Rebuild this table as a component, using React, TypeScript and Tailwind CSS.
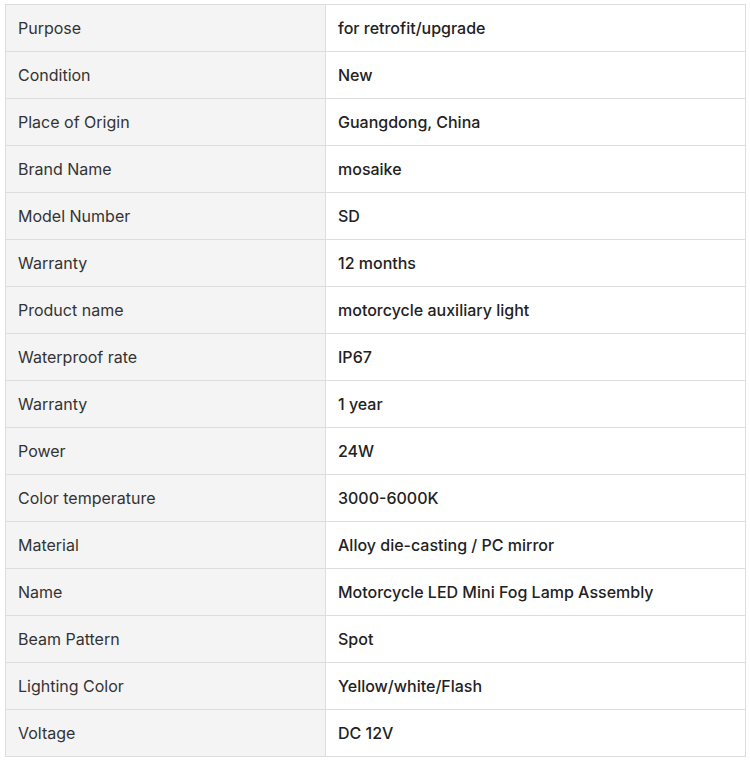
const specs: [string, string][] = [
  ["Purpose", "for retrofit/upgrade"],
  ["Condition", "New"],
  ["Place of Origin", "Guangdong, China"],
  ["Brand Name", "mosaike"],
  ["Model Number", "SD"],
  ["Warranty", "12 months"],
  ["Product name", "motorcycle auxiliary light"],
  ["Waterproof rate", "IP67"],
  ["Warranty", "1 year"],
  ["Power", "24W"],
  ["Color temperature", "3000-6000K"],
  ["Material", "Alloy die-casting / PC mirror"],
  ["Name", "Motorcycle LED Mini Fog Lamp Assembly"],
  ["Beam Pattern", "Spot"],
  ["Lighting Color", "Yellow/white/Flash"],
  ["Voltage", "DC 12V"],
];

export default function App() {
  return (
    <div className="bg-white pl-[5px] pt-[4px] font-['Inter',sans-serif] text-[16px] leading-[22px] text-[#333]">
      <table className="w-[741px] table-fixed border-collapse border border-[#ddd]">
        <colgroup>
          <col className="w-[320px]" />
          <col />
        </colgroup>
        <tbody>
          {specs.map(([label, value], i) => (
            <tr key={i} className="border-b border-[#ddd]">
              <td className="border-r border-[#ddd] bg-[#f4f4f4] px-3 py-3 text-left">
                {label}
              </td>
              <td className="bg-white px-3 py-3 text-left font-medium text-[#222]">
                {value}
              </td>
            </tr>
          ))}
        </tbody>
      </table>
    </div>
  );
}
